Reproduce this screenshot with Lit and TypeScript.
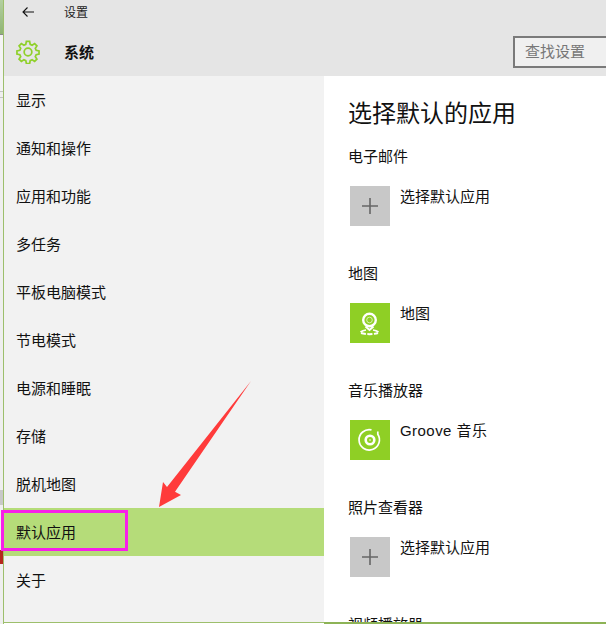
import { LitElement, html, css, svg } from "lit";
import { customElement } from "lit/decorators.js";

const NAV = ["显示", "通知和操作", "应用和功能", "多任务", "平板电脑模式", "节电模式", "电源和睡眠", "存储", "脱机地图", "默认应用", "关于"];

const plus = html`<div class="tile grey"><svg width="40" height="40" viewBox="0 0 40 40"><path d="M20 12v16M12 20h16" stroke="#666" stroke-width="1.600" fill="none"/></svg></div>`;
const map = html`<div class="tile green"><svg width="40" height="40" viewBox="0 0 40 40" fill="none" stroke="#fff">
  <circle cx="19.500" cy="17" r="6.300" stroke-width="2.400"/><circle cx="19.500" cy="17" r="2.800" stroke-width="1" opacity=".65"/>
  <path d="M15.500 23.500l4 3.500 4-3.500" stroke-width="2"/><path d="M10.500 29c2-1.400 4-1.800 5.500-2M28.500 29c-2-1.400-4-1.800-5.500-2" stroke-width="1.700"/><path d="M11 30c4 1.500 13 1.500 17 0" stroke-width="2" stroke-dasharray="5 1.500"/></svg></div>`;
const disc = html`<div class="tile green"><svg width="40" height="40" viewBox="0 0 40 40" fill="none" stroke="#fff">
  <path d="M27.800 11.500v2.800A10.200 10.200 0 1 1 21.500 9.900" stroke-width="1.700"/><circle cx="20" cy="20" r="4.300" stroke-width="2.600"/><circle cx="20" cy="20" r=".8" fill="#fff" stroke="none"/></svg></div>`;

const SECTIONS = [
  { title: "电子邮件", icon: plus, label: "选择默认应用", latin: false },
  { title: "地图", icon: map, label: "地图", latin: false },
  { title: "音乐播放器", icon: disc, label: "Groove 音乐", latin: true },
  { title: "照片查看器", icon: plus, label: "选择默认应用", latin: false },
];

@customElement("app-root")
export class AppRoot extends LitElement {
  static styles = css`
    :host { display: block; width: 606px; height: 624px; overflow: hidden; position: relative; background: #fff; font-family: "Liberation Sans", "Noto Sans CJK SC", sans-serif; color: #111; }
    .frame { display: flex; height: 624px; }
    .edge { width: 3px; flex: none; display: flex; flex-direction: column; background: #efefef; }
    .e-green { height: 34px; background: linear-gradient(#b3cfa0, #8fb474); }
    .e-dark { height: 1px; background: #8a8a8a; }
    .e-gap1 { height: 56px; background: #f4f4f4; }
    .e-line { height: 1px; background: #c4c4c4; }
    .e-gap2 { height: 5px; }
    .e-gap3 { height: 392px; }
    .e-grey { height: 15px; background: #c8c8c8; }
    .e-gap4 { height: 45px; }
    .e-red { height: 14px; background: #b5281e; }
    .win { flex: 1; min-width: 0; display: flex; flex-direction: column; border-left: 1px solid #9dbf6c; height: 624px; }
    header { height: 76px; flex: none; background: #e5e5e5; display: flex; flex-direction: column; }
    .top { height: 23px; display: flex; align-items: center; padding-left: 18px; font-size: 12px; gap: 30px; color: #222; }
    .sys { flex: 1; display: flex; align-items: center; padding: 4px 0 0 12px; font-size: 15px; font-weight: 700; gap: 24px; }
    .search { margin-left: auto; width: 93px; height: 32px; box-sizing: border-box; border: 2px solid #7a7a7a; border-right: none; background: #f0f0f0; color: #777; font-size: 15px; font-weight: 400; display: flex; align-items: center; padding: 0 0 2px 10px; }
    .body { flex: 1; display: flex; min-height: 0; }
    nav { width: 320px; flex: none; background: #f2f2f2; }
    .item { height: 48px; box-sizing: border-box; display: flex; align-items: center; padding: 0 0 2px 12px; font-size: 15px; }
    .item.on { background: #b5dc79; }
    main { flex: 1; padding: 23px 0 0 24px; overflow: hidden; }
    h1 { margin: 0 0 17px; font-size: 24px; font-weight: 400; line-height: 30px; }
    .sec { height: 117px; }
    .sec h2 { margin: 0; padding-top: 1px; font-size: 15px; font-weight: 400; line-height: 20px; }
    .row { display: flex; gap: 10px; margin: 19px 0 0 2px; font-size: 15px; line-height: 20px; }
    .tile { width: 40px; height: 40px; flex: none; }
    .tile svg { display: block; }
    .grey { background: #c8c8c8; }
    .green { background: #8fcf25; }
    .row span { margin-top: 1px; }
    .row span.latin { letter-spacing: .45px; }
    .foot { height: 2px; flex: none; display: flex; }
    .foot-l { width: 320px; height: 1px; background: #9dbf6c; }
    .foot-r { flex: 1; background: #8db356; }
    .marker { position: absolute; left: 1px; top: 510px; width: 127px; height: 41px; box-sizing: border-box; border: 3px solid #f71fe8; }
    .arrow { position: absolute; left: 0; top: 0; pointer-events: none; }
  `;

  render() {
    return html`
      <div class="frame">
        <div class="edge">
          <div class="e-green"></div><div class="e-dark"></div><div class="e-gap1"></div>
          <div class="e-line"></div><div class="e-gap2"></div><div class="e-line"></div>
          <div class="e-gap3"></div><div class="e-grey"></div><div class="e-gap4"></div><div class="e-red"></div>
        </div>
        <div class="win">
          <header>
            <div class="top">
              <svg width="12" height="10" viewBox="0 0 12 10" fill="none" stroke="#111" stroke-width="1.100"><path d="M12 5H1M5.500 .5L1 5l4.500 4.500"/></svg>
              <span>设置</span>
            </div>
            <div class="sys">
              <svg width="24" height="24" viewBox="0 0 25 25" fill="none" stroke="#8fd02a" stroke-width="1.800">
                <circle cx="12.500" cy="12.500" r="4"/>
                <path d="M10.800 1.500h3.400l.6 3 2 .9 2.600-1.700 2.400 2.400-1.700 2.600.9 2 3 .6v3.400l-3 .6-.9 2 1.700 2.600-2.400 2.400-2.600-1.700-2 .9-.6 3h-3.400l-.6-3-2-.9-2.600 1.700-2.400-2.400 1.700-2.600-.9-2-3-.6v-3.400l3-.6.9-2-1.700-2.600 2.400-2.400 2.600 1.700 2-.9z"/>
              </svg>
              <span>系统</span>
              <div class="search">查找设置</div>
            </div>
          </header>
          <div class="body">
            <nav>${NAV.map((n) => html`<div class="item ${n === "默认应用" ? "on" : ""}">${n}</div>`)}</nav>
            <main>
              <h1>选择默认的应用</h1>
              ${SECTIONS.map((s) => html`<div class="sec"><h2>${s.title}</h2><div class="row">${s.icon}<span class="${s.latin ? "latin" : ""}">${s.label}</span></div></div>`)}
              <div class="sec"><h2>视频播放器</h2></div>
            </main>
          </div>
          <div class="foot"><div class="foot-l"></div><div class="foot-r"></div></div>
        </div>
      </div>
      <div class="marker"></div>
      <svg class="arrow" width="606" height="624" viewBox="0 0 606 624">
        ${svg`<path d="M251 381L167 487L163 482L159 507L181 495L175 491.700Z" fill="#ff3b3b"/>`}
      </svg>
    `;
  }
}
